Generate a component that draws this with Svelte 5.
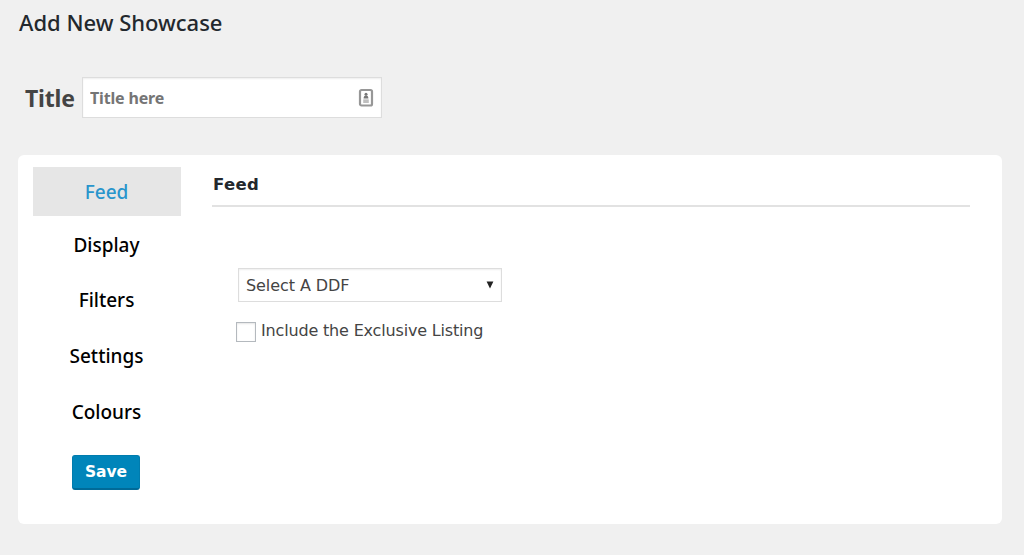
<script>
  const tabs = ['Feed', 'Display', 'Filters', 'Settings', 'Colours'];
  let active = $state('Feed');
  let title = $state('');
  let exclusive = $state(false);
</script>

<main>
  <h1>Add New Showcase</h1>

  <div class="title-row">
    <label for="title"><span>Title</span></label>
    <div class="title-field">
      <input id="title" placeholder="Title here" bind:value={title} />
      <svg width="16" height="20" viewBox="0 0 16 20" aria-hidden="true">
        <rect x="2" y="2" width="12" height="15.5" rx="1.5" fill="#fff" stroke="#979797" stroke-width="2.2" />
        <circle cx="8" cy="6.3" r="1.5" fill="#777" />
        <path d="M5.6 10.6q0-3 2.4-3t2.4 3z" fill="#777" />
        <path d="M5.2 12.2h5.6M5.2 14h5.6" stroke="#aaa" stroke-width="1.3" />
      </svg>
    </div>
  </div>

  <section class="card">
    <nav>
      {#each tabs as tab}
        <button class="tab" class:active={active === tab} onclick={() => (active = tab)}>{tab}</button>
      {/each}
      <button class="save"><span>Save</span></button>
    </nav>

    <div class="panel">
      <h2><span>{active}</span></h2>
      <button class="select">
        <span>Select A DDF</span>
        <svg width="8" height="8" viewBox="0 0 8 8" aria-hidden="true"><path d="M.6.4h6.8L4 7.6z" fill="#222" /></svg>
      </button>
      <label class="check">
        <input type="checkbox" bind:checked={exclusive} />
        <span>Include the Exclusive Listing</span>
      </label>
    </div>
  </section>
</main>

<style>
  :global(body) {
    margin: 0;
    background: #f0f0f0;
  }
  main {
    box-sizing: border-box;
    height: 555px;
    padding: 7px 22px 0 18px;
    overflow: hidden;
    font-family: 'DejaVu Sans', sans-serif;
  }
  button {
    border: 0;
    padding: 0;
    background: none;
    font: inherit;
    cursor: pointer;
  }
  h1 {
    margin: 0;
    height: 30px;
    padding-left: 1px;
    color: #23282d;
    font: 500 22px/30px 'Noto Sans', sans-serif;
  }
  .title-row {
    display: flex;
    align-items: center;
    height: 41px;
    margin-top: 40px;
    padding-left: 7px;
  }
  .title-row label {
    width: 57px;
    color: #444;
    font: 700 23px/41px 'Noto Sans', sans-serif;
    letter-spacing: -0.2px;
    padding-top: 2px;
  }
  .title-field {
    box-sizing: border-box;
    display: flex;
    align-items: center;
    width: 300px;
    height: 41px;
    padding: 0 7px;
    background: #fff;
    border: 1px solid #ddd;
    box-shadow: inset 0 1px 2px rgba(0, 0, 0, 0.07);
  }
  .title-field input {
    flex: 1;
    min-width: 0;
    padding: 1px 0 0;
    border: 0;
    outline: 0;
    background: none;
    color: #444;
    font: 700 16px/24px 'Noto Sans', sans-serif;
    letter-spacing: -0.17px;
  }
  .title-field input::placeholder {
    color: #757575;
    opacity: 1;
  }
  .card {
    box-sizing: border-box;
    display: flex;
    width: 984px;
    height: 369px;
    margin-top: 37px;
    padding: 12px 32px 0 15px;
    background: #fff;
    border-radius: 6px;
  }
  nav {
    display: flex;
    flex-direction: column;
    align-items: center;
    width: 148px;
  }
  .tab {
    box-sizing: border-box;
    width: 148px;
    height: 49px;
    margin-bottom: 6.8px;
    padding-right: 1px;
    color: #000;
    font: 500 19px/48px 'Noto Sans', sans-serif;
  }
  .tab.active {
    margin-bottom: 4px;
    background: #e6e6e6;
    color: #2995cc;
  }
  .save {
    box-sizing: border-box;
    width: 68px;
    height: 35px;
    margin: 12px 2px 0 0;
    border: 1px solid #007cae;
    border-bottom: 2px solid #006a98;
    border-radius: 3px;
    background: #0085ba;
    color: #fff;
    font-size: 15.5px;
    font-weight: 700;
  }
  .panel {
    display: flex;
    flex-direction: column;
    align-items: flex-start;
    flex: 1;
    margin-left: 31px;
  }
  h2 {
    box-sizing: border-box;
    width: 100%;
    height: 40px;
    margin: 0;
    padding-left: 1px;
    border-bottom: 2px solid #e2e2e2;
    color: #23282d;
    font-size: 16.5px;
    letter-spacing: 0.3px;
    line-height: 36px;
  }
  .select {
    box-sizing: border-box;
    display: flex;
    align-items: center;
    justify-content: space-between;
    width: 264px;
    height: 34px;
    margin: 61px 0 0 26px;
    padding: 0 7px;
    border: 1px solid #ddd;
    box-shadow: inset 0 1px 2px rgba(0, 0, 0, 0.07);
    color: #444;
    font-size: 16px;
    letter-spacing: -0.07px;
  }
  .check {
    display: flex;
    align-items: center;
    height: 20px;
    margin: 20px 0 0 24px;
    color: #444;
    font-size: 16px;
    letter-spacing: -0.17px;
  }
  .check input {
    appearance: none;
    box-sizing: border-box;
    width: 20px;
    height: 20px;
    margin: 0 5px 0 0;
    border: 1px solid #b4b9be;
    background: #fff;
    box-shadow: inset 0 1px 2px rgba(0, 0, 0, 0.1);
  }
  .check input:checked {
    background: #1e8cbe;
  }
  .check span {
    margin-top: -3px;
  }
</style>
